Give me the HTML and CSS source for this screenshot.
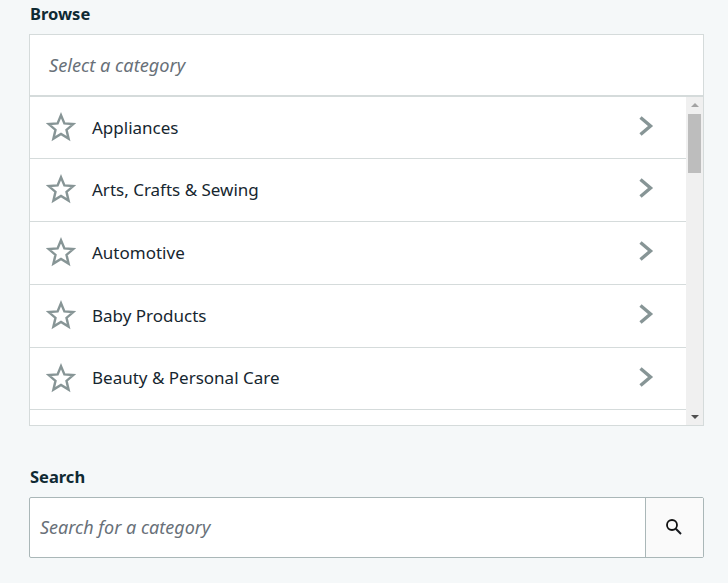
FILE: index.html
```html
<!DOCTYPE html>
<html lang="en">
<head>
<meta charset="utf-8">
<title>Browse categories</title>
<link rel="stylesheet" href="styles.css">
</head>
<body>
<svg class="defs" width="0" height="0" aria-hidden="true">
  <symbol id="star" viewBox="0 0 30 30"><path d="M15 3.200l3.400 8.200 8.900.7-6.800 5.800 2.100 8.700L15 21.900l-7.600 4.700 2.100-8.700-6.800-5.800 8.900-.7z" fill="none" stroke="#879596" stroke-width="2.400" stroke-linejoin="miter"/></symbol>
  <symbol id="chev" viewBox="0 0 16 22"><path d="M2.500 2.500L12.500 11 2.500 19.500" fill="none" stroke="#879596" stroke-width="3.400"/></symbol>
</svg>
<section class="browse">
  <h2 class="label">Browse</h2>
  <div class="panel">
    <div class="panel-head">Select a category</div>
    <div class="panel-body">
      <ul class="list">
        <li class="row r62"><svg class="star"><use href="#star"/></svg><span class="name first">Appliances</span><svg class="chev"><use href="#chev"/></svg></li>
        <li class="row r63"><svg class="star"><use href="#star"/></svg><span class="name">Arts, Crafts &amp; Sewing</span><svg class="chev"><use href="#chev"/></svg></li>
        <li class="row r63"><svg class="star"><use href="#star"/></svg><span class="name">Automotive</span><svg class="chev"><use href="#chev"/></svg></li>
        <li class="row r63"><svg class="star"><use href="#star"/></svg><span class="name">Baby Products</span><svg class="chev"><use href="#chev"/></svg></li>
        <li class="row r62"><svg class="star"><use href="#star"/></svg><span class="name">Beauty &amp; Personal Care</span><svg class="chev"><use href="#chev"/></svg></li>
      </ul>
      <div class="scrollbar">
        <span class="arrow up"></span>
        <span class="thumb"></span>
        <span class="arrow down"></span>
      </div>
    </div>
  </div>
</section>
<section class="search">
  <h2 class="label">Search</h2>
  <div class="search-box">
    <div class="search-input">Search for a category</div>
    <button class="search-btn" type="button" aria-label="Search">
      <svg class="search-icon" width="18" height="18" viewBox="0 0 18 18"><circle cx="7" cy="7" r="5" fill="none" stroke="#111" stroke-width="1.800"/><path d="M10.800 10.800L16 16" fill="none" stroke="#16191f" stroke-width="2"/></svg>
    </button>
  </div>
</section>
</body>
</html>
```
FILE: styles.css
```css
* { box-sizing: border-box; }
html, body { height: 100%; }
body {
  margin: 0;
  padding: 0 24px 0 29px;
  background: #f5f8f9;
  font-family: "Noto Sans", "Open Sans", sans-serif;
  color: #16262f;
  overflow: hidden;
}
.defs { display: block; height: 0; }
.label {
  margin: 0;
  height: 34px;
  padding-top: 3px;
  padding-left: 1px;
  font-size: 16.500px;
  line-height: 22px;
  font-weight: 700;
  color: #0f2a33;
}
.panel {
  height: 392px;
  border: 1px solid #d5dbdb;
  background: #fff;
  display: flex;
  flex-direction: column;
}
.panel-head {
  height: 62px;
  flex: none;
  padding: 0 0 0 19px;
  border-bottom: 2px solid #d5dbdb;
  display: flex;
  align-items: center;
  font-style: italic;
  font-size: 18.200px;
  color: #687078;
}
.panel-body { flex: 1; display: flex; min-height: 0; }
.list { flex: 1; margin: 0; padding: 0; list-style: none; min-width: 0; }
.row {
  display: flex;
  align-items: center;
  padding: 0 32px 0 16px;
  border-bottom: 1px solid #d5dbdb;
}
.r62 { height: 62px; }
.r63 { height: 63px; }
.star { width: 30px; height: 30px; flex: none; margin-bottom: 2px; }
.name { flex: 1; margin: 0 0 2px 16px; font-size: 17px; color: #16262f; }
.name.first { margin-bottom: 0; }
.chev { width: 16px; height: 22px; flex: none; margin-bottom: 4px; }
.scrollbar {
  width: 17px;
  flex: none;
  background: #f0f0f0;
  display: flex;
  flex-direction: column;
  align-items: center;
}
.arrow { width: 0; height: 0; border-left: 4px solid transparent; border-right: 4px solid transparent; }
.up { margin-top: 6px; border-bottom: 4px solid #a3a3a3; }
.down { margin-top: auto; margin-bottom: 6px; border-top: 4px solid #505050; }
.thumb { width: 13px; height: 59px; margin-top: 7px; background: #bdbdbd; }
.search { margin-top: 37px; }
.search-box {
  height: 61px;
  display: flex;
  background: #fff;
  border: 1px solid #aab7b8;
  border-radius: 2px;
}
.search-input {
  flex: 1;
  padding: 0 0 1px 10px;
  display: flex;
  align-items: center;
  font-style: italic;
  font-size: 18px;
  color: #687078;
}
.search-btn {
  width: 58px;
  padding: 0 2px 0 0;
  border: 0;
  border-left: 1px solid #aab7b8;
  background: #fafafa;
  display: flex;
  align-items: center;
  justify-content: center;
}
.search-icon { margin-bottom: 2px; }
```
